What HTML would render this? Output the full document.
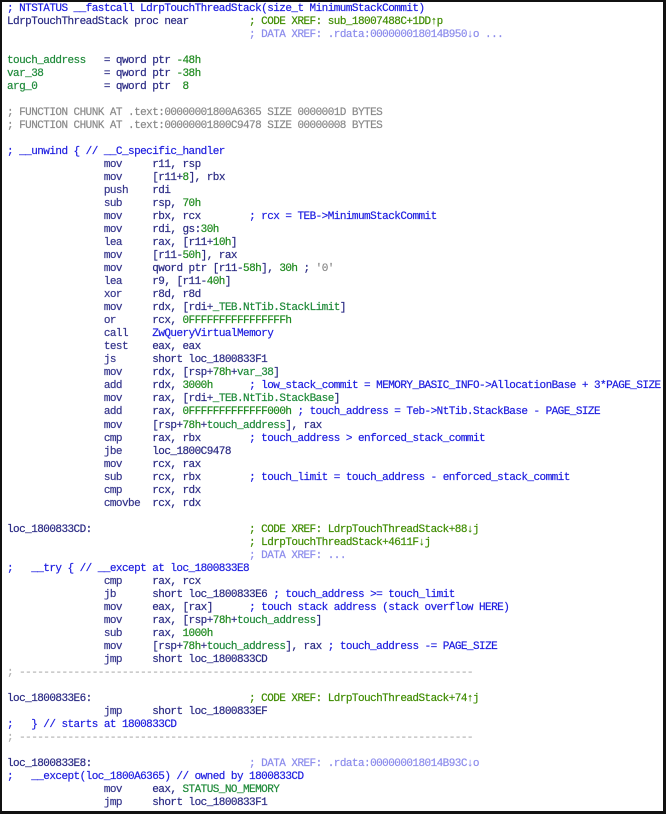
<!DOCTYPE html>
<html><head><meta charset="utf-8">
<style>
html,body{margin:0;padding:0;background:#fff;}
body{width:668px;height:815px;overflow:hidden;position:relative;}
.box{position:absolute;left:0;top:0;width:661px;height:809px;border:2px solid #111;border-right-width:3px;border-bottom-width:3px;background:#fff;}
pre{margin:0;padding:1px 0 0 5px;font-family:"Liberation Mono",monospace;font-size:11px;letter-spacing:-0.55px;line-height:13.02px;color:#2a2a84;white-space:pre;-webkit-text-stroke:0.2px;}
.m{color:#35358c}
.b{color:#1c1ce0}
.g{color:#1f8a1f}
.v{color:#1f8a3a}
.x{color:#3f8c00}
.d{color:#8c8cec}
.c{color:#8a8a8a}
.s{color:#b0b0b0}
</style></head><body><div class="box"><pre><span class="b">; NTSTATUS __fastcall LdrpTouchThreadStack(size_t MinimumStackCommit)</span>
LdrpTouchThreadStack proc near          <span class="x">; CODE XREF: sub_18007488C+1DD↑p</span>
                                        <span class="d">; DATA XREF: .rdata:000000018014B950↓o ...</span>

<span class="v">touch_address</span>   = qword ptr <span class="g">-48h</span>
<span class="v">var_38</span>          = qword ptr <span class="g">-38h</span>
<span class="v">arg_0</span>           = qword ptr  <span class="g">8</span>

<span class="c">; FUNCTION CHUNK AT .text:00000001800A6365 SIZE 0000001D BYTES</span>
<span class="c">; FUNCTION CHUNK AT .text:00000001800C9478 SIZE 00000008 BYTES</span>

<span class="b">; __unwind { // __C_specific_handler</span>
                <span class="m">mov</span>     r11, rsp
                <span class="m">mov</span>     [r11+<span class="g">8</span>], rbx
                <span class="m">push</span>    rdi
                <span class="m">sub</span>     rsp, <span class="g">70h</span>
                <span class="m">mov</span>     rbx, rcx        <span class="b">; rcx = TEB-&gt;MinimumStackCommit</span>
                <span class="m">mov</span>     rdi, gs:<span class="g">30h</span>
                <span class="m">lea</span>     rax, [r11+<span class="g">10h</span>]
                <span class="m">mov</span>     [r11-<span class="g">50h</span>], rax
                <span class="m">mov</span>     qword ptr [r11-<span class="g">58h</span>], <span class="g">30h</span> ; <span class="c">'0'</span>
                <span class="m">lea</span>     r9, [r11-<span class="g">40h</span>]
                <span class="m">xor</span>     r8d, r8d
                <span class="m">mov</span>     rdx, [rdi+<span class="v">_TEB.NtTib.StackLimit</span>]
                <span class="m">or</span>      rcx, <span class="g">0FFFFFFFFFFFFFFFFh</span>
                <span class="m">call</span>    <span class="b">ZwQueryVirtualMemory</span>
                <span class="m">test</span>    eax, eax
                <span class="m">js</span>      short loc_1800833F1
                <span class="m">mov</span>     rdx, [rsp+<span class="g">78h</span>+<span class="v">var_38</span>]
                <span class="m">add</span>     rdx, <span class="g">3000h</span>      <span class="b">; low_stack_commit = MEMORY_BASIC_INFO-&gt;AllocationBase + 3*PAGE_SIZE</span>
                <span class="m">mov</span>     rax, [rdi+<span class="v">_TEB.NtTib.StackBase</span>]
                <span class="m">add</span>     rax, <span class="g">0FFFFFFFFFFFFF000h</span> <span class="b">; touch_address = Teb-&gt;NtTib.StackBase - PAGE_SIZE</span>
                <span class="m">mov</span>     [rsp+<span class="g">78h</span>+<span class="v">touch_address</span>], rax
                <span class="m">cmp</span>     rax, rbx        <span class="b">; touch_address &gt; enforced_stack_commit</span>
                <span class="m">jbe</span>     loc_1800C9478
                <span class="m">mov</span>     rcx, rax
                <span class="m">sub</span>     rcx, rbx        <span class="b">; touch_limit = touch_address - enforced_stack_commit</span>
                <span class="m">cmp</span>     rcx, rdx
                <span class="m">cmovbe</span>  rcx, rdx

loc_1800833CD:                          <span class="x">; CODE XREF: LdrpTouchThreadStack+88↓j</span>
                                        <span class="x">; LdrpTouchThreadStack+4611F↓j</span>
                                        <span class="d">; DATA XREF: ...</span>
<span class="b">;   __try { // __except at loc_1800833E8</span>
                <span class="m">cmp</span>     rax, rcx
                <span class="m">jb</span>      short loc_1800833E6 <span class="b">; touch_address &gt;= touch_limit</span>
                <span class="m">mov</span>     eax, [rax]      <span class="b">; touch stack address (stack overflow HERE)</span>
                <span class="m">mov</span>     rax, [rsp+<span class="g">78h</span>+<span class="v">touch_address</span>]
                <span class="m">sub</span>     rax, <span class="g">1000h</span>
                <span class="m">mov</span>     [rsp+<span class="g">78h</span>+<span class="v">touch_address</span>], rax <span class="b">; touch_address -= PAGE_SIZE</span>
                <span class="m">jmp</span>     short loc_1800833CD
<span class="s">; ---------------------------------------------------------------------------</span>

loc_1800833E6:                          <span class="x">; CODE XREF: LdrpTouchThreadStack+74↑j</span>
                <span class="m">jmp</span>     short loc_1800833EF
<span class="b">;   } // starts at 1800833CD</span>
<span class="s">; ---------------------------------------------------------------------------</span>

loc_1800833E8:                          <span class="d">; DATA XREF: .rdata:000000018014B93C↓o</span>
<span class="b">;   __except(loc_1800A6365) // owned by 1800833CD</span>
                <span class="m">mov</span>     eax, <span class="v">STATUS_NO_MEMORY</span>
                <span class="m">jmp</span>     short loc_1800833F1</pre></div></body></html>
